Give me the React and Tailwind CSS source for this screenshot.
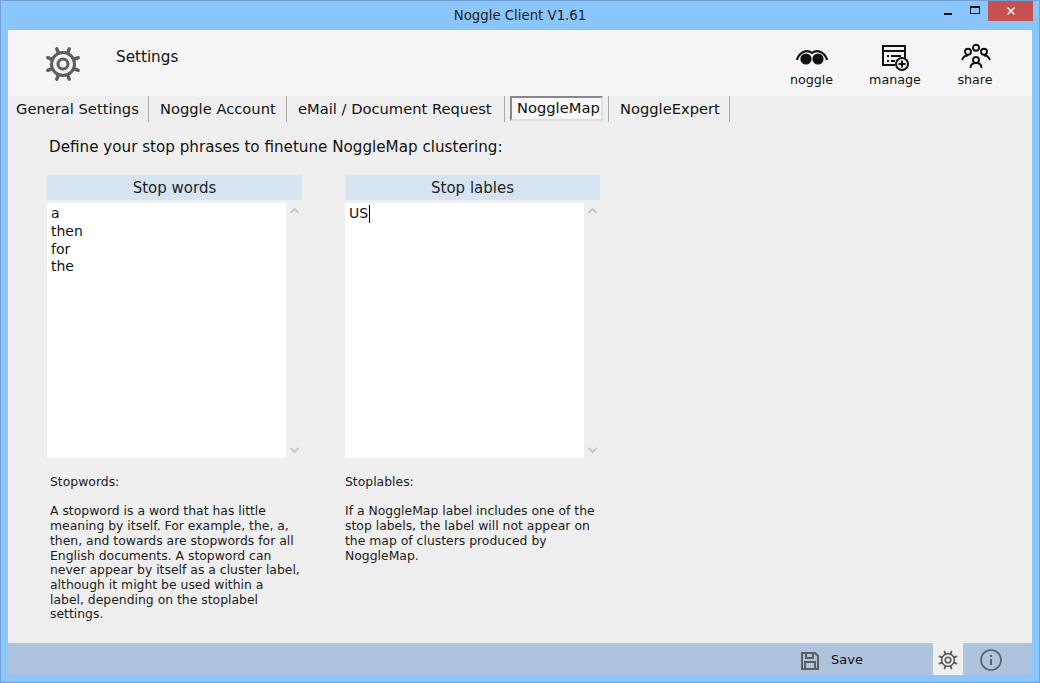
import React from 'react';
import { X } from 'lucide-react';

function Gear({ className }) {
  const teeth = [0, 45, 90, 135, 180, 225, 270, 315];
  return (
    <svg viewBox="0 0 36 36" className={className} fill="none" stroke="currentColor">
      <circle cx="18" cy="18" r="11.5" strokeWidth="3" />
      <circle cx="18" cy="18" r="5" strokeWidth="3" />
      {teeth.map((a) => (
        <line key={a} x1="18" y1="6" x2="18" y2="1.5" strokeWidth="3.4" strokeLinecap="round" transform={`rotate(${a + 22.5} 18 18)`} />
      ))}
    </svg>
  );
}

function ToolButton({ label, className, children }) {
  return (
    <div className={`flex flex-col items-center ${className}`}>
      <div className="flex h-[30px] items-start">{children}</div>
      <span className="mt-[-1px] text-[12.7px] leading-[18px]">{label}</span>
    </div>
  );
}

function ListBox({ title, lines, caret }) {
  return (
    <div className="w-[255px]">
      <div className="flex h-[25px] items-center justify-center bg-[#d6e4f2] pt-[2px] text-[15px] text-[#222]">{title}</div>
      <div className="mt-[3px] flex h-[255px]">
        <div className="w-[239px] bg-white px-[4px] pt-[2px] text-[14px] leading-[17.8px] text-[#111]">
          {lines.map((l) => (
            <div key={l} className="flex items-stretch">
              {l}
              {caret && <span className="ml-[1px] w-px bg-black" />}
            </div>
          ))}
        </div>
        <div className="flex flex-1 flex-col items-center justify-between py-[4px]">
          <svg width="11" height="7" viewBox="0 0 11 7" fill="none" stroke="#c8c8c8" strokeWidth="2"><path d="M1.5 6 5.5 2l4 4" /></svg>
          <svg width="11" height="7" viewBox="0 0 11 7" fill="none" stroke="#c8c8c8" strokeWidth="2"><path d="M1.5 1l4 4 4-4" /></svg>
        </div>
      </div>
    </div>
  );
}

function Help({ title, lines, className }) {
  return (
    <div className={`mt-[17px] text-[12.4px] leading-[14.7px] text-[#1a1a1a] ${className}`}>
      <div>{title}</div>
      <div className="mt-[14.7px]">
        {lines.map((l) => (
          <div key={l} className="whitespace-nowrap">{l}</div>
        ))}
      </div>
    </div>
  );
}

export default function App() {
  return (
    <div className="flex h-[683px] w-[1040px] flex-col overflow-hidden border border-[#6f9fd0] bg-[#8ac5fb] px-[7px] pb-[7px] font-['DejaVu_Sans',sans-serif] text-[#111]">
      <div className="relative flex h-[29px] shrink-0 items-center justify-center text-[13.3px] text-[#222]">
        Noggle Client V1.61
        <div className="absolute right-[-1px] top-0 flex h-[20px] items-center">
          <span className="mr-[18px] mt-[6px] h-[2px] w-[8px] bg-[#111]" />
          <span className="mr-[8px] mb-[2px] h-[8px] w-[10px] border border-t-2 border-[#111]" />
          <span className="flex h-[20px] w-[45px] items-center justify-center bg-[#c75050]">
            <X size={12} strokeWidth={3} className="text-white" />
          </span>
        </div>
      </div>

      <div className="flex min-h-0 flex-1 flex-col bg-[#efefef]">
        <div className="flex h-[66px] shrink-0 bg-[#f5f5f5]">
          <Gear className="ml-[37px] mt-[16px] h-[36px] w-[36px] text-[#5e5e5e]" />
          <span className="ml-[35px] mt-[17px] text-[15.2px] leading-[20px]">Settings</span>
          <div className="ml-auto mr-[16px] mt-[12px] flex">
            <ToolButton label="noggle" className="w-[89px]">
              <svg className="ml-[1px] mt-[7px]" width="32" height="17" viewBox="0 0 32 17">
                <path d="M1 11C3 3 11 0 16 4c5-4 13-1 15 7" fill="none" stroke="#111" strokeWidth="2.2" />
                <circle cx="10" cy="10" r="5.6" fill="#111" />
                <circle cx="22" cy="10" r="5.6" fill="#111" />
              </svg>
            </ToolButton>
            <ToolButton label="manage" className="w-[78px]">
              <svg className="ml-[2px] mt-[2px]" width="30" height="27" viewBox="0 0 30 27" fill="none" stroke="#111" strokeWidth="2">
                <path d="M14 21H2V2h22v12" />
                <path d="M2 7h22" />
                <path d="M6 12h2M10 12h10M6 17h2M10 17h4" />
                <circle cx="21" cy="20" r="6" fill="#f5f5f5" />
                <path d="M21 16.500v7M17.500 20h7" />
              </svg>
            </ToolButton>
            <ToolButton label="share" className="w-[82px]">
              <svg className="ml-[2px] mt-[1px]" width="30" height="26" viewBox="0 0 30 26" fill="none" stroke="#111" strokeWidth="1.9">
                <circle cx="15" cy="4.700" r="3" />
                <circle cx="7" cy="8.700" r="3" />
                <circle cx="23" cy="8.700" r="3" />
                <circle cx="15" cy="17" r="3" />
                <path d="M1 17c1-3 3-4.500 6-4.500M29 17c-1-3-3-4.500-6-4.500M9.500 25c0-3 2-5 5.500-5s5.500 2 5.500 5" />
              </svg>
            </ToolButton>
          </div>
        </div>

        <div className="flex h-[26px] shrink-0 text-[14.7px] text-[#111]">
          <div className="flex w-[141px] items-center border-r border-[#aaa] pl-[8px] pt-[1px]">General Settings</div>
          <div className="flex w-[138px] items-center border-r border-[#aaa] pl-[11px] pt-[1px]">Noggle Account</div>
          <div className="flex w-[218px] items-center border-r border-[#aaa] pl-[11px] pt-[1px]">eMail / Document Request</div>
          <div className="flex w-[104px] items-start border-r border-[#aaa] pl-[5px]">
            <span className="flex h-[25px] w-[93px] items-center border-2 border-[#888] border-r-[#ddd] border-b-[#ddd] bg-[#f7f7f7] pl-[5px]">NoggleMap</span>
          </div>
          <div className="flex w-[121px] items-center border-r border-[#aaa] pl-[11px] pt-[1px]">NoggleExpert</div>
        </div>

        <div className="ml-[41px] mt-[16px] text-[15.17px] leading-[18px] text-[#111]">
          Define your stop phrases to finetune NoggleMap clustering:
        </div>

        <div className="ml-[39px] mt-[19px] flex flex-1 gap-[43px]">
          <div>
            <ListBox title="Stop words" lines={['a', 'then', 'for', 'the']} />
            <Help
              className="ml-[3px]"
              title="Stopwords:"
              lines={[
                'A stopword is a word that has little',
                'meaning by itself. For example, the, a,',
                'then, and towards are stopwords for all',
                'English documents. A stopword can',
                'never appear by itself as a cluster label,',
                'although it might be used within a',
                'label, depending on the stoplabel',
                'settings.',
              ]}
            />
          </div>
          <div>
            <ListBox title="Stop lables" lines={['US']} caret />
            <Help
              title="Stoplables:"
              lines={[
                'If a NoggleMap label includes one of the',
                'stop labels, the label will not appear on',
                'the map of clusters produced by',
                'NoggleMap.',
              ]}
            />
          </div>
        </div>

        <div className="flex h-[32px] shrink-0 items-center bg-[#aec3de]">
          <svg className="ml-auto mt-[4px]" width="20" height="20" viewBox="0 0 20 20" fill="none" stroke="#5e5e5e" strokeWidth="2">
            <path d="M2 2h13l3 3v13H2z" />
            <path d="M6 2v5h7V2M5 18v-7h10v7" />
          </svg>
          <span className="ml-[11px] mt-[2px] text-[13px] text-[#111]">Save</span>
          <div className="ml-[70px] flex h-[32px] w-[30px] items-center justify-center bg-[#efefef]">
            <Gear className="mt-[1px] h-[20px] w-[20px] text-[#5e5e5e]" />
          </div>
          <div className="mr-[30px] ml-[17px] mt-[2px]">
            <svg width="22" height="22" viewBox="0 0 22 22" fill="none" stroke="#5e5e5e" strokeWidth="1.6">
              <circle cx="11" cy="11" r="10" />
              <path d="M11 10v6" strokeWidth="2" />
              <path d="M11 6v2" strokeWidth="2" />
            </svg>
          </div>
        </div>
      </div>
    </div>
  );
}
